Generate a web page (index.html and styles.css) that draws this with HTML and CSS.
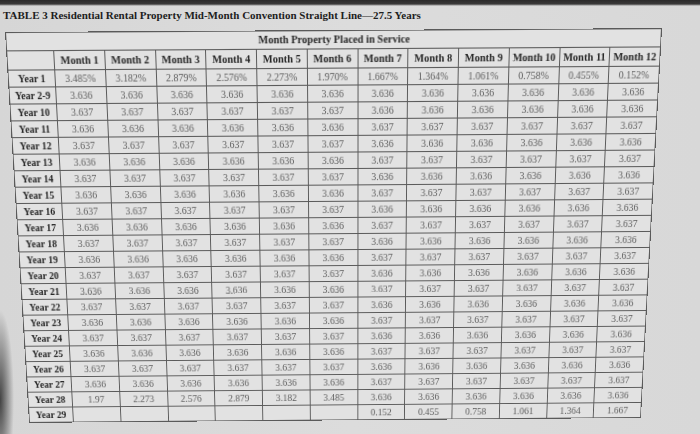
FILE: index.html
```html
<!DOCTYPE html>
<html>
<head>
<meta charset="utf-8">
<link rel="stylesheet" href="styles.css">
</head>
<body>
<div class="page">
<div class="title">TABLE 3 Residential Rental Property Mid-Month Convention Straight Line—27.5 Years</div>
<table class="grid">
<colgroup><col class="c-year"><col><col><col><col><col><col><col><col><col><col><col><col></colgroup>
<tr class="r-span"><th colspan="13">Month Property Placed in Service</th></tr>
<tr class="r-head"><th></th><th>Month 1</th><th>Month 2</th><th>Month 3</th><th>Month 4</th><th>Month 5</th><th>Month 6</th><th>Month 7</th><th>Month 8</th><th>Month 9</th><th>Month 10</th><th>Month 11</th><th>Month 12</th></tr>
<tr><th>Year 1</th><td>3.485%</td><td>3.182%</td><td>2.879%</td><td>2.576%</td><td>2.273%</td><td>1.970%</td><td>1.667%</td><td>1.364%</td><td>1.061%</td><td>0.758%</td><td>0.455%</td><td>0.152%</td></tr>
<tr><th>Year 2-9</th><td>3.636</td><td>3.636</td><td>3.636</td><td>3.636</td><td>3.636</td><td>3.636</td><td>3.636</td><td>3.636</td><td>3.636</td><td>3.636</td><td>3.636</td><td>3.636</td></tr>
<tr><th>Year 10</th><td>3.637</td><td>3.637</td><td>3.637</td><td>3.637</td><td>3.637</td><td>3.637</td><td>3.636</td><td>3.636</td><td>3.636</td><td>3.636</td><td>3.636</td><td>3.636</td></tr>
<tr><th>Year 11</th><td>3.636</td><td>3.636</td><td>3.636</td><td>3.636</td><td>3.636</td><td>3.636</td><td>3.637</td><td>3.637</td><td>3.637</td><td>3.637</td><td>3.637</td><td>3.637</td></tr>
<tr><th>Year 12</th><td>3.637</td><td>3.637</td><td>3.637</td><td>3.637</td><td>3.637</td><td>3.637</td><td>3.636</td><td>3.636</td><td>3.636</td><td>3.636</td><td>3.636</td><td>3.636</td></tr>
<tr><th>Year 13</th><td>3.636</td><td>3.636</td><td>3.636</td><td>3.636</td><td>3.636</td><td>3.636</td><td>3.637</td><td>3.637</td><td>3.637</td><td>3.637</td><td>3.637</td><td>3.637</td></tr>
<tr><th>Year 14</th><td>3.637</td><td>3.637</td><td>3.637</td><td>3.637</td><td>3.637</td><td>3.637</td><td>3.636</td><td>3.636</td><td>3.636</td><td>3.636</td><td>3.636</td><td>3.636</td></tr>
<tr><th>Year 15</th><td>3.636</td><td>3.636</td><td>3.636</td><td>3.636</td><td>3.636</td><td>3.636</td><td>3.637</td><td>3.637</td><td>3.637</td><td>3.637</td><td>3.637</td><td>3.637</td></tr>
<tr><th>Year 16</th><td>3.637</td><td>3.637</td><td>3.637</td><td>3.637</td><td>3.637</td><td>3.637</td><td>3.636</td><td>3.636</td><td>3.636</td><td>3.636</td><td>3.636</td><td>3.636</td></tr>
<tr><th>Year 17</th><td>3.636</td><td>3.636</td><td>3.636</td><td>3.636</td><td>3.636</td><td>3.636</td><td>3.637</td><td>3.637</td><td>3.637</td><td>3.637</td><td>3.637</td><td>3.637</td></tr>
<tr><th>Year 18</th><td>3.637</td><td>3.637</td><td>3.637</td><td>3.637</td><td>3.637</td><td>3.637</td><td>3.636</td><td>3.636</td><td>3.636</td><td>3.636</td><td>3.636</td><td>3.636</td></tr>
<tr><th>Year 19</th><td>3.636</td><td>3.636</td><td>3.636</td><td>3.636</td><td>3.636</td><td>3.636</td><td>3.637</td><td>3.637</td><td>3.637</td><td>3.637</td><td>3.637</td><td>3.637</td></tr>
<tr><th>Year 20</th><td>3.637</td><td>3.637</td><td>3.637</td><td>3.637</td><td>3.637</td><td>3.637</td><td>3.636</td><td>3.636</td><td>3.636</td><td>3.636</td><td>3.636</td><td>3.636</td></tr>
<tr><th>Year 21</th><td>3.636</td><td>3.636</td><td>3.636</td><td>3.636</td><td>3.636</td><td>3.636</td><td>3.637</td><td>3.637</td><td>3.637</td><td>3.637</td><td>3.637</td><td>3.637</td></tr>
<tr><th>Year 22</th><td>3.637</td><td>3.637</td><td>3.637</td><td>3.637</td><td>3.637</td><td>3.637</td><td>3.636</td><td>3.636</td><td>3.636</td><td>3.636</td><td>3.636</td><td>3.636</td></tr>
<tr><th>Year 23</th><td>3.636</td><td>3.636</td><td>3.636</td><td>3.636</td><td>3.636</td><td>3.636</td><td>3.637</td><td>3.637</td><td>3.637</td><td>3.637</td><td>3.637</td><td>3.637</td></tr>
<tr><th>Year 24</th><td>3.637</td><td>3.637</td><td>3.637</td><td>3.637</td><td>3.637</td><td>3.637</td><td>3.636</td><td>3.636</td><td>3.636</td><td>3.636</td><td>3.636</td><td>3.636</td></tr>
<tr><th>Year 25</th><td>3.636</td><td>3.636</td><td>3.636</td><td>3.636</td><td>3.636</td><td>3.636</td><td>3.637</td><td>3.637</td><td>3.637</td><td>3.637</td><td>3.637</td><td>3.637</td></tr>
<tr><th>Year 26</th><td>3.637</td><td>3.637</td><td>3.637</td><td>3.637</td><td>3.637</td><td>3.637</td><td>3.636</td><td>3.636</td><td>3.636</td><td>3.636</td><td>3.636</td><td>3.636</td></tr>
<tr><th>Year 27</th><td>3.636</td><td>3.636</td><td>3.636</td><td>3.636</td><td>3.636</td><td>3.636</td><td>3.637</td><td>3.637</td><td>3.637</td><td>3.637</td><td>3.637</td><td>3.637</td></tr>
<tr><th>Year 28</th><td>1.97</td><td>2.273</td><td>2.576</td><td>2.879</td><td>3.182</td><td>3.485</td><td>3.636</td><td>3.636</td><td>3.636</td><td>3.636</td><td>3.636</td><td>3.636</td></tr>
<tr><th>Year 29</th><td></td><td></td><td></td><td></td><td></td><td></td><td>0.152</td><td>0.455</td><td>0.758</td><td>1.061</td><td>1.364</td><td>1.667</td></tr>
</table>
</div>
</body>
</html>
```

FILE: styles.css
```css
html, body {
  margin: 0;
  padding: 0;
}
body {
  width: 700px;
  height: 434px;
  overflow: hidden;
  font-family: "Liberation Serif", "DejaVu Serif", serif;
  background:
    linear-gradient(to bottom, #2b2a2a 0, #3a3939 4px, rgba(0,0,0,0) 6px),
    radial-gradient(ellipse 14px 90px at 0 400px, rgba(40,40,40,0.85), rgba(40,40,40,0) 100%),
    linear-gradient(to right, #d6d6d6 0, #dcdcdc 50%, #d8d8d8 100%);
}
.page {
  display: flex;
  flex-direction: column;
}
.title {
  height: 28px;
  line-height: 30px;
  padding-left: 3px;
  font-size: 11px;
  font-weight: bold;
  color: #1e1e1e;
  white-space: nowrap;
}
.grid {
  width: 657px;
  height: 387px;
  table-layout: fixed;
  border-collapse: collapse;
  background: #e2e2e2;
  transform-origin: 0 0;
  transform: matrix3d(1.003563, -0.005938, 0, 0.0000053815,
                      0.067535, 1.082514, 0, 0.00019031,
                      0, 0, 1, 0,
                      5, 4, 0, 1);
}
.c-year {
  width: 47px;
}
.grid th, .grid td {
  border: 1px solid #5a5a5a;
  padding: 0;
  text-align: center;
  white-space: nowrap;
  overflow: hidden;
  height: 15px;
  line-height: 14px;
}
.grid th {
  font-size: 10px;
  font-weight: bold;
  color: #262626;
}
.grid td {
  font-size: 10px;
  color: #5c5c5c;
}
.r-span th {
  height: 16px;
  font-size: 10.5px;
}
.r-head th {
  height: 17px;
  font-size: 10.5px;
}
```
